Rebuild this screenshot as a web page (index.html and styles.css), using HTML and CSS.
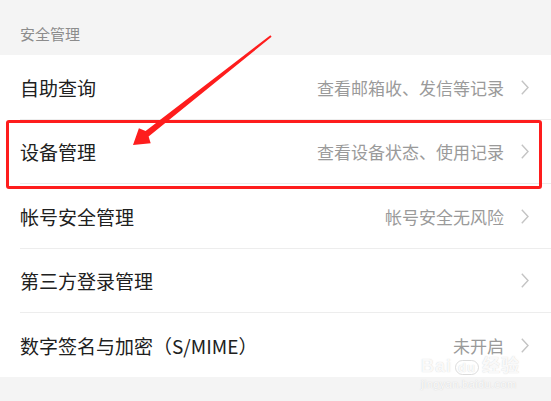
FILE: index.html
```html
<!DOCTYPE html>
<html lang="zh">
<head>
<meta charset="utf-8">
<link rel="stylesheet" href="styles.css">
</head>
<body>
<div class="page">
  <div class="section-head">安全管理</div>
  <ul class="list">
    <li class="row tall"><span class="title">自助查询</span><span class="desc">查看邮箱收、发信等记录</span><svg class="chev" width="8" height="15" viewBox="0 0 8 15"><polyline points="0.8,0.8 7,7.5 0.8,14.2" fill="none" stroke="#c4c4c4" stroke-width="1.4"/></svg></li>
    <li class="row"><span class="title">设备管理</span><span class="desc">查看设备状态、使用记录</span><svg class="chev" width="8" height="15" viewBox="0 0 8 15"><polyline points="0.8,0.8 7,7.5 0.8,14.2" fill="none" stroke="#c4c4c4" stroke-width="1.4"/></svg></li>
    <li class="row tall"><span class="title">帐号安全管理</span><span class="desc">帐号安全无风险</span><svg class="chev" width="8" height="15" viewBox="0 0 8 15"><polyline points="0.8,0.8 7,7.5 0.8,14.2" fill="none" stroke="#c4c4c4" stroke-width="1.4"/></svg></li>
    <li class="row"><span class="title">第三方登录管理</span><span class="desc"></span><svg class="chev" width="8" height="15" viewBox="0 0 8 15"><polyline points="0.8,0.8 7,7.5 0.8,14.2" fill="none" stroke="#c4c4c4" stroke-width="1.4"/></svg></li>
    <li class="row"><span class="title">数字签名与加密（S/MIME）</span><span class="desc">未开启</span><svg class="chev" width="8" height="15" viewBox="0 0 8 15"><polyline points="0.8,0.8 7,7.5 0.8,14.2" fill="none" stroke="#c4c4c4" stroke-width="1.4"/></svg></li>
  </ul>
  <div class="highlight"></div>
  <svg class="arrow" width="551" height="401" viewBox="0 0 551 401">
    <polygon fill="#fe1d1d" points="133,145 150.7,143.2 148.6,136.6 271.6,36.8 270.4,35.2 145.6,131.0 138.9,128.2"/>
  </svg>
  <div class="watermark">
    <div class="wm-logo">Bai<span class="wm-du">du</span>经验</div>
    <div class="wm-url">jingyan.baidu.com</div>
  </div>
</div>
</body>
</html>
```
FILE: styles.css
```css
* { box-sizing: border-box; }
html, body { margin: 0; padding: 0; }
body {
  background: #f4f4f4;
  font-family: "Noto Sans CJK SC", "Noto Sans", sans-serif;
  width: 551px;
  height: 401px;
  overflow: hidden;
}
.page { position: relative; width: 551px; height: 401px; }
.section-head {
  height: 55px;
  padding: 12px 0 0 20px;
  display: flex;
  align-items: center;
  font-size: 15px;
  color: #8c8c8c;
}
.list {
  list-style: none;
  margin: 0;
  padding: 0 0 0 20px;
  background: #fff;
}
.row {
  height: 64px;
  display: flex;
  align-items: center;
  border-bottom: 1px solid #ededed;
  padding-right: 22px;
}
.row.tall { height: 65px; }
.row:last-child { border-bottom: none; }
.title {
  font-size: 19px;
  color: #202020;
  flex: 1;
  white-space: nowrap;
}
.desc {
  font-size: 17px;
  color: #9a9a9a;
  white-space: nowrap;
}
.chev {
  display: block;
  margin-left: 17px;
  flex: none;
}
.highlight {
  position: absolute;
  left: 6px;
  top: 120px;
  width: 536px;
  height: 69px;
  border: 3px solid #fe1d1d;
  border-radius: 3px;
}
.arrow { position: absolute; left: 0; top: 0; }
.watermark {
  position: absolute;
  left: 421px;
  top: 357px;
  color: rgba(255,255,255,0.9);
  text-shadow: 0 0 1px rgba(160,160,160,0.5);
  font-family: "Liberation Sans", "Noto Sans CJK SC", sans-serif;
  line-height: 1;
}
.wm-logo { font-size: 18px; font-weight: bold; letter-spacing: 1px; }
.wm-du {
  display: inline-block;
  font-size: 13px;
  border: 1.5px solid rgba(205,205,205,0.7);
  border-radius: 8px;
  padding: 0 2px;
  margin: 0 3px;
}
.wm-url { font-size: 11px; margin-top: 4px; letter-spacing: 0.4px; }
```
